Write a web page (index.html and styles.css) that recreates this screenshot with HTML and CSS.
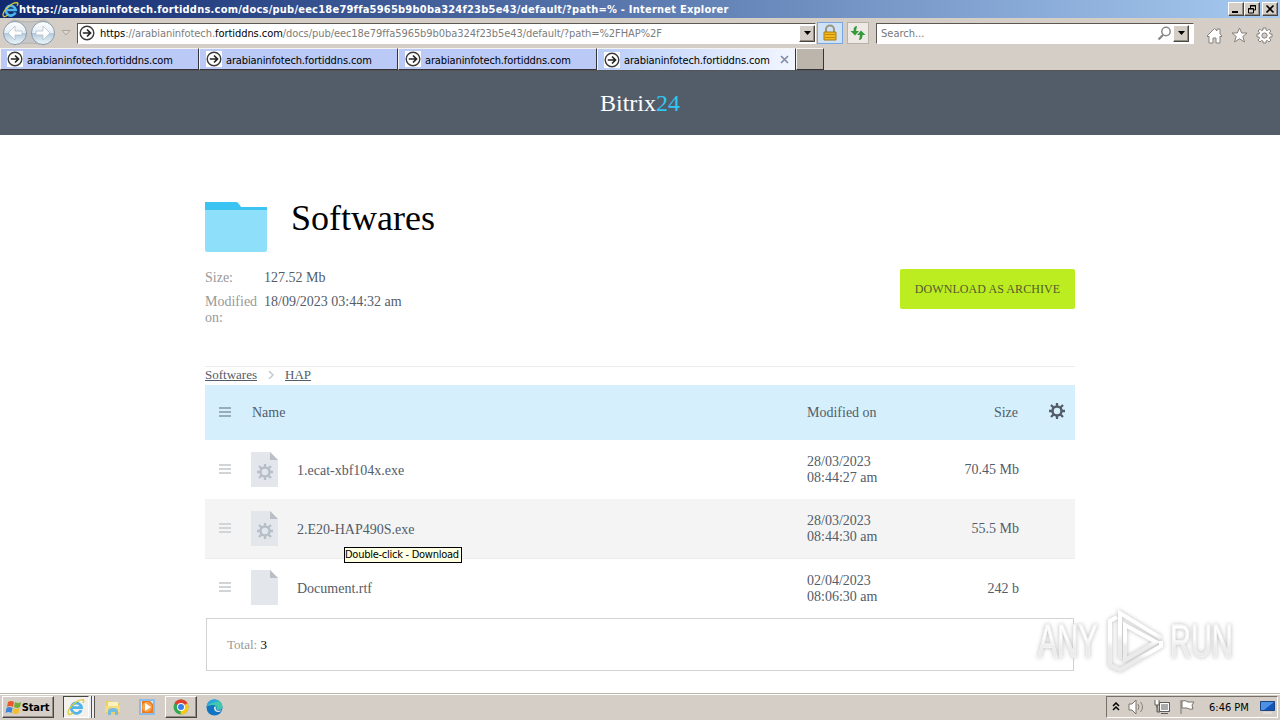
FILE: index.html
```
<!DOCTYPE html>
<html lang="en">
<head>
  <meta charset="UTF-8" />
  <title>Bitrix24</title>
  <link rel="stylesheet" href="styles.css">
</head>
<body>
  <!-- shared icons -->
  <svg class="defs" width="0" height="0">
    <linearGradient id="round" x2="0" y2="1"><stop stop-color="#fff"/><stop offset=".48" stop-color="#e6eef5"/><stop offset=".52" stop-color="#b6cadc"/><stop offset="1" stop-color="#eef8fc"/></linearGradient>
    <linearGradient id="shade" x2="0" y2="1"><stop offset=".45" stop-color="#fff"/><stop offset=".6" stop-color="#ebebeb"/></linearGradient>
    <symbol id="go" viewBox="0 0 16 16"><path d="M0 0h16v16H0z" fill="#fff"/><circle cx="8" cy="8" r="6.800" fill="#fff" stroke="#3a3a3a" stroke-width="1.4"/><path d="M3.8 8H11M8 4.500L11.500 8 8 11.500" fill="none" stroke="#222" stroke-width="1.700"/></symbol>
    <symbol id="ie" viewBox="0 0 16 16"><path d="M12.600 10.800A4.600 4.600 0 1 1 12.900 8.500H4.500" fill="none" stroke="#4fb4ea" stroke-width="2.500"/><path d="M1.500 14.500C-1 11 8 1.500 14 1.500c1.800.200.600 2.400 0 3M1.500 14.500c1 .600 2.800-.500 4-1.400" fill="none" stroke="#dccb3e" stroke-width="1.200"/></symbol>
    <symbol id="gear" viewBox="0 0 16 16"><circle cx="8" cy="8" r="4.500" fill="none" stroke="currentColor" stroke-width="2.500"/><path d="M8 0v3M8 13v3M0 8h3M13 8h3M2 2l2.500 2.500M11.500 11.500L14 14M14 2l-2.500 2.500M4.500 11.500L2 14" stroke="currentColor" stroke-width="2.300"/></symbol>
    <symbol id="page" viewBox="0 0 27 35"><path d="M0 0h19l8 8v27H0z" fill="#e3e6ea"/><path d="M19 0l8 8h-8z" fill="#b9bfc4"/></symbol>
  </svg>

  <header class="titlebar">
    <svg width="17" height="17"><use href="#ie"/></svg>
    <span class="title">https://arabianinfotech.fortiddns.com/docs/pub/eec18e79ffa5965b9b0ba324f23b5e43/default/?path=% - Internet Explorer</span>
    <div class="controls">
      <span class="btn"><svg width="12" height="10"><path d="M2 8h6" stroke="#000" stroke-width="2"/></svg></span>
      <span class="btn"><svg width="12" height="10"><path d="M4.500 4V1.500h5V6H8M4 2h6M2.500 4.500h5V9h-5zM2 5h6" fill="none" stroke="#000"/></svg></span>
      <span class="btn close"><svg width="12" height="10"><path d="M2.500 1.500l7 7M9.500 1.500l-7 7" stroke="#000" stroke-width="1.700"/></svg></span>
    </div>
  </header>

  <nav class="navbar">
    <svg class="backforward" width="56" height="28" viewBox="0 0 56 28">
      <path d="M13 1Q28 5 43 1a13 13 0 0 1 0 25Q28 22 13 26A13 13 0 0 1 13 1z" fill="#c7c7c7" stroke="#b5b2ae"/>
      <g fill="url(#round)" stroke="#899bab"><circle cx="14" cy="14" r="11.500"/><circle cx="42" cy="14" r="11.500"/></g>
      <path d="M14 7l-7 7 7 7v-5h7v-4h-7zM42 7l7 7-7 7v-5h-7v-4h7z" fill="#fff" stroke="#a9bac9" stroke-width=".7"/>
    </svg>
    <svg class="history" width="10" height="6"><path d="M1 .500h8L5 5z" fill="#ddd8d2" stroke="#aaa49c"/></svg>
    <div class="field address">
      <svg width="16" height="16"><use href="#go"/></svg>
      <span class="url"><b>https</b>://arabianinfotech.<b>fortiddns.com</b>/docs/pub/eec18e79ffa5965b9b0ba324f23b5e43/default/?path=%2FHAP%2F</span>
      <span class="btn drop"><svg width="7" height="4"><path d="M0 0h7L3.500 4z"/></svg></span>
    </div>
    <span class="tool lock"><svg width="16" height="18"><path d="M4 9V5.500a4 4 0 0 1 8 0V9" fill="none" stroke="#999682" stroke-width="2"/><path d="M2 8h12v8H2z" fill="#eeb91c" stroke="#a97c12"/><path d="M3 10.500h10M3 13.500h10" stroke="#c98b09"/></svg></span>
    <span class="tool refresh"><svg width="16" height="14"><path d="M7 0Q3.500 0 3.500 5H.500L5 9.500 9 5H6zM9 14q3.500 0 3.500-5h3L11 4.500 7 9h3z" fill="#349b3a"/></svg></span>
    <div class="field search">
      <span>Search...</span>
      <svg width="15" height="15"><circle cx="9" cy="5.500" r="4.200" fill="#fff" stroke="#888" stroke-width="1.500"/><path d="M6 9l-4.500 4.500" stroke="#888" stroke-width="2.300"/></svg>
      <span class="btn drop"><svg width="7" height="4"><path d="M0 0h7L3.500 4z"/></svg></span>
    </div>
    <div class="nav-icons">
      <svg width="17" height="17"><path d="M1 9l7.500-7.500L11 4V2h3v5l2 2-1 1-1-1v7h-4v-5H7v5H3V9l-1 1z" fill="#fff" stroke="#85817b"/></svg>
      <svg width="17" height="17"><path d="M8.500 1l2.200 5H16l-4.200 3.500L13.500 15l-5-3.200-5 3.200 1.700-5.500L1 6h5.300z" fill="#fff" stroke="#85817b"/></svg>
      <svg width="17" height="17"><path d="M7 1h3v2l1.500.700L13 2.200 15 4l-1.500 1.700L14 7h2v3h-2l-.600 1.300L15 13l-2 2-1.500-1.500L10 14v2H7v-2l-1.500-.500L4 15l-2-2 1.500-1.700L3 10H1V7h2l.500-1.300L2 4l2-1.800 1.500 1.500L7 3z" fill="#fff" stroke="#85817b"/><circle cx="8.500" cy="8.500" r="2.600" fill="#d4cec6" stroke="#85817b"/></svg>
    </div>
  </nav>

  <div class="tabs">
    <div class="tab"><svg width="16" height="16"><use href="#go"/></svg><span>arabianinfotech.fortiddns.com</span></div>
    <div class="tab"><svg width="16" height="16"><use href="#go"/></svg><span>arabianinfotech.fortiddns.com</span></div>
    <div class="tab"><svg width="16" height="16"><use href="#go"/></svg><span>arabianinfotech.fortiddns.com</span></div>
    <div class="tab active"><svg width="16" height="16"><use href="#go"/></svg><span>arabianinfotech.fortiddns.com</span><svg class="x" width="9" height="9"><path d="M1 1l7 7M8 1L1 8" stroke="#858da5" stroke-width="1.700"/></svg></div>
    <div class="tab new"></div>
  </div>

  <main class="page">
    <div class="brand">Bitrix<span>24</span></div>
    <div class="content">
      <div class="heading">
        <svg width="62" height="50"><path d="M0 0h31q2 0 3 2l2 3h26v6H0z" fill="#3bc4f2"/><path d="M0 8h62v40q0 2-2 2H2q-2 0-2-2z" fill="#8ddffa"/></svg>
        <h1>Softwares</h1>
      </div>
      <div class="info">
        <dl>
          <dt>Size:</dt><dd>127.52 Mb</dd>
          <dt>Modified on:</dt><dd>18/09/2023 03:44:32 am</dd>
        </dl>
        <a class="download">DOWNLOAD AS ARCHIVE</a>
      </div>
      <div class="crumbs"><a>Softwares</a><svg width="6" height="8"><path d="M1 0l4 4-4 4" fill="none" stroke="#c5c9cd" stroke-width="1.500"/></svg><a>HAP</a></div>

      <div class="row head">
        <i class="burger"></i><span class="name">Name</span><span class="date">Modified on</span><span class="size">Size</span>
        <svg class="settings" width="16" height="16"><use href="#gear"/></svg>
      </div>
      <div class="row">
        <i class="burger"></i>
        <svg class="file" width="27" height="35"><use href="#page"/><svg class="cog" x="6" y="12" width="16" height="16"><use href="#gear"/></svg></svg>
        <span class="name">1.ecat-xbf104x.exe</span><span class="date">28/03/2023<br>08:44:27 am</span><span class="size">70.45 Mb</span>
      </div>
      <div class="row hover">
        <i class="burger"></i>
        <svg class="file" width="27" height="35"><use href="#page"/><svg class="cog" x="6" y="12" width="16" height="16"><use href="#gear"/></svg></svg>
        <span class="name">2.E20-HAP490S.exe</span><span class="date">28/03/2023<br>08:44:30 am</span><span class="size">55.5 Mb</span>
        <span class="tooltip">Double-click - Download</span>
      </div>
      <div class="row last">
        <i class="burger"></i>
        <svg class="file" width="27" height="35"><use href="#page"/></svg>
        <span class="name">Document.rtf</span><span class="date">02/04/2023<br>08:06:30 am</span><span class="size">242 b</span>
      </div>
      <div class="total">Total: <b>3</b></div>
    </div>

    <div class="watermark">
      <span>ANY</span>
      <svg width="60" height="66" viewBox="0 0 60 66">
        <g fill="none" stroke="url(#shade)" stroke-width="4">
          <path d="M11 9L4 13v44l7 4"/>
          <path d="M14 51V5l41 25"/>
          <path d="M19 17l31 17-31 18z"/>
          <path d="M9 59l5 3 41-24v-5"/>
        </g>
      </svg>
      <span>RUN</span>
    </div>
  </main>

  <footer class="taskbar">
    <div class="btn start"><svg width="17" height="16"><path d="M3 3q3-2 6 0L8 8Q5 6 2 8z" fill="#e9592a"/><path d="M10 3q3 2 6 0l-1 5q-3 2-6 0z" fill="#71ae36"/><path d="M1.500 9q3-2 6 0l-1 5q-3-2-6 0z" fill="#3e83d6"/><path d="M8.500 9q3 2 6 0l-1 5q-3 2-6 0z" fill="#f5bd29"/></svg><span>Start</span></div>
    <div class="task-ie"><svg width="18" height="18"><use href="#ie"/></svg></div>
    <i class="stack"></i><i class="stack"></i>
    <svg class="explorer" width="18" height="18"><path d="M2 3h6l1 2h7v11H2z" fill="#edcf69"/><path d="M4 4h10v5H4z" fill="#fbf1bc"/><path d="M1 8h15v6H1z" fill="#f5db81"/><path d="M4 17v-4q0-3 5-3t5 3v4h-3v-3H7v3z" fill="#74bde0"/></svg>
    <svg class="media" width="18" height="18"><path d="M1 1h16v16H1z" fill="#8fbce5"/><path d="M3 3h12v12H3z" fill="#d6eaf6"/><path d="M4 3h8l3 3v9H4z" fill="#ee7b17"/><circle cx="9" cy="9" r="5" fill="#f6a24e"/><path d="M7 5l6 4-6 4z" fill="#fff"/></svg>
    <div class="btn chrome"><svg width="16" height="16"><circle cx="8" cy="8" r="7.500" fill="#36a852"/><path d="M8 8L1.500 4.300A7.500 7.500 0 0 1 14.500 4.300z" fill="#e33e2d"/><path d="M8 8l6.500-3.700A7.500 7.500 0 0 1 7.500 15.500z" fill="#fbc818"/><circle cx="8" cy="8" r="4" fill="#fff"/><circle cx="8" cy="8" r="3" fill="#397fea"/></svg></div>
    <svg class="edge" width="17" height="17"><circle cx="8.500" cy="8.500" r="8" fill="#1474c4"/><path d="M.600 8C1-1 15-2 16.500 7c.300 4-4 4.500-6.500 3.500 2-3-1-5-4-4.500S1 7 .600 8z" fill="#40c7ad"/><path d="M.600 8C1 0 9-1 13 2 9 3 3 4 .600 8z" fill="#2ba6dc"/><path d="M8 9c0-2 2-2 2-.500-.500 1-.500 2 1 3 2 .600 4 .300 5-.500-2 3-8 3-8-2z" fill="#d9e7ea"/></svg>
    <div class="tray">
      <svg width="8" height="10"><path d="M1 4l3-3 3 3M1 8l3-3 3 3" fill="none" stroke="#000" stroke-width="1.500"/></svg>
      <svg width="18" height="16"><path d="M1 5h3l4-4v14l-4-4H1z" fill="#fff" stroke="#77736c"/><path d="M10 5q2 3 0 6M12.500 3q4 5 0 10" fill="none" stroke="#858078"/></svg>
      <svg width="17" height="16"><path d="M5.500 3.500h10v9h-10zM7 14.500h7M3 6v7h3" fill="#aaa" stroke="#605c57"/><path d="M6.500 4.500h8v7h-8z" fill="none" stroke="#fff"/><path d="M1 1v5h4V1M3 6v3" fill="#fff" stroke="#605c57"/></svg>
      <svg width="17" height="16"><path d="M2 1v14M3 2q4-1 6 1h6l-2 3 1 4q-3 1-6-1H3z" fill="#fff" stroke="#77736c"/></svg>
      <span>6:46 PM</span>
      <svg width="15" height="13"><path d="M.500.500h14v9H.500z" fill="#1555ba" stroke="#174683"/><path d="M1 1h13L4 9H1z" fill="#4c91e5"/><path d="M3 12h9" stroke="#eee"/></svg>
    </div>
  </footer>
</body>
</html>
```
FILE: styles.css
```
* {
  box-sizing: border-box;
}
body {
  margin: 0;
  width: 1280px;
  height: 720px;
  overflow: hidden;
  background: #d4cec6;
  font: 11px "DejaVu Sans Condensed", "DejaVu Sans", sans-serif;
  color: #000;
}
svg {
  display: block;
  flex: none;
}
.defs {
  position: absolute;
}
.btn {
  display: flex;
  align-items: center;
  justify-content: center;
  background: #d4cec6;
  border: 1px solid;
  border-color: #fff #494641 #494641 #fff;
  box-shadow: inset -1px -1px #928c84;
}
.titlebar {
  height: 18px;
  display: flex;
  align-items: center;
  padding: 0 2px;
  background: linear-gradient(90deg, #10296f, #a6caf0);
  color: #fff;
}
.title {
  font-weight: bold;
  letter-spacing: 0.23px;
  white-space: nowrap;
}
.controls {
  margin-left: auto;
  display: flex;
}
.controls .btn {
  width: 16px;
  height: 14px;
}
.controls .close {
  margin-left: 2px;
}
.navbar {
  height: 30px;
  display: flex;
  align-items: center;
  padding-left: 1px;
}
.history {
  margin: 0 6px 0 4px;
}
.field {
  height: 21px;
  display: flex;
  align-items: center;
  background: #fff;
  border: 1px solid;
  border-color: #5d5852 #fff #fff #5d5852;
}
.address {
  width: 739px;
  padding-left: 1px;
}
.url {
  margin-left: 5px;
  color: #7d7d7d;
  letter-spacing: -0.06px;
  white-space: nowrap;
}
.url b {
  font-weight: normal;
  color: #000;
}
.drop {
  width: 16px;
  height: 17px;
  margin-left: auto;
}
.tool {
  width: 26px;
  height: 22px;
  display: flex;
  align-items: center;
  justify-content: center;
  background: #cee1f5;
  border: 1px solid #79a7df;
}
.lock {
  margin-left: 1px;
}
.refresh {
  width: 22px;
  margin: 0 7px 0 4px;
  background: #eee9e4;
  border-color: #b8b1a8;
}
.search {
  width: 318px;
  padding: 0 4px;
  color: #777;
}
.search > svg {
  margin-left: auto;
}
.search .drop {
  margin-left: 1px;
}
.nav-icons {
  display: flex;
  gap: 8px;
  margin: 4px 0 0 12px;
}
.tabs {
  height: 23px;
  display: flex;
  border-bottom: 1px solid #555;
}
.tab {
  width: 199px;
  display: flex;
  align-items: center;
  padding-left: 6px;
  background: #bac9f5;
  border: 1px solid;
  border-color: #f5f3ef #35343b #35343b #f5f3ef;
  border-width: 1px 1px 1px 1px;
}
.tab span {
  margin: 2px 0 0 4px;
  letter-spacing: -0.13px;
}
.tab.active {
  background: linear-gradient(90deg, #b9cdf9, #f2f6ff);
  border-bottom: 0;
}
.tab .x {
  margin-left: 10px;
}
.tab.new {
  width: 28px;
  background: #bcb5ab;
}
.page {
  position: relative;
  height: 622px;
  background: #fff;
  font-family: "Liberation Serif", serif;
  font-size: 14px;
  line-height: 16px;
  color: #535c69;
}
.brand {
  height: 64px;
  background: #535c69;
  color: #fff;
  font-size: 24px;
  line-height: 65px;
  text-align: center;
}
.brand span {
  color: #2fc6f6;
}
.content {
  width: 870px;
  margin: 0 auto;
  padding-top: 67px;
}
.heading {
  display: flex;
  gap: 24px;
}
h1 {
  margin: 0;
  font-size: 36px;
  font-weight: normal;
  line-height: 33px;
  color: #000;
}
.info {
  display: flex;
  justify-content: space-between;
  height: 115px;
  padding-top: 17px;
  border-bottom: 1px solid #eaebed;
}
dl {
  display: grid;
  grid-template-columns: 59px 200px;
  row-gap: 8px;
  align-content: start;
  margin: 1px 0 0;
}
dt {
  padding-right: 5px;
  color: #999;
}
dd {
  margin: 0;
}
.download {
  width: 175px;
  height: 40px;
  border-radius: 2px;
  background: #bbed21;
  color: #535c30;
  font-size: 12px;
  letter-spacing: 0.08px;
  line-height: 40px;
  text-align: center;
}
.crumbs {
  height: 18px;
  display: flex;
  align-items: center;
  gap: 11px;
  font-size: 13px;
  line-height: 14px;
  padding-bottom: 2px;
}
.crumbs a {
  text-decoration: underline;
}
.row {
  position: relative;
  height: 59px;
  display: flex;
  align-items: center;
  padding-left: 14px;
}
.row.head {
  height: 55px;
  background: #d5f0fc;
}
.row.hover {
  height: 60px;
  background: #f4f4f4;
  border-bottom: 1px solid #ececec;
}
.burger {
  width: 12px;
  height: 10px;
  margin: -2px 20px 0 0;
  border-top: 2px solid #d2d5d8;
  border-bottom: 2px solid #d2d5d8;
  background: linear-gradient(#d2d5d8, #d2d5d8) 0 2px / 12px 2px no-repeat;
}
.head .burger {
  margin-right: 21px;
  border-color: #97adb9;
  background-image: linear-gradient(#97adb9, #97adb9);
}
.last .file {
  margin-top: -2px;
}
.last .burger {
  margin-top: -4px;
}
.cog {
  color: #b6bfc7;
}
.name {
  width: 510px;
  margin: 2px 0 0 19px;
}
.last .name {
  margin-top: 0;
}
.head .name {
  width: 555px;
  margin: 0;
}
.date {
  width: 90px;
}
.size {
  width: 122px;
  text-align: right;
}
.head .size {
  width: 121px;
}
.settings {
  margin: -3px 0 0 31px;
}
.tooltip {
  position: absolute;
  left: 139px;
  top: 48px;
  z-index: 1;
  height: 16px;
  width: 118px;
  background: #ffffe1;
  border: 1px solid #000;
  color: #000;
  font: 11px/14px "DejaVu Sans Condensed", sans-serif;
  letter-spacing: -0.26px;
  white-space: nowrap;
}
.total {
  height: 53px;
  margin: 0 1px;
  padding-left: 20px;
  border: 1px solid #d2d3d5;
  font-size: 13px;
  line-height: 51px;
  color: #999;
}
.total b {
  font-weight: normal;
  color: #000;
}
.watermark {
  position: absolute;
  left: 1038px;
  top: 537px;
  display: flex;
  align-items: center;
  gap: 4px;
  filter: drop-shadow(0 0 2px #bbb);
}
.watermark span {
  width: 98px;
  margin-right: -34px;
  font: 46px/66px "Liberation Sans", sans-serif;
  color: transparent;
  background: linear-gradient(#fff 45%, #ebebeb 60%);
  -webkit-background-clip: text;
  background-clip: text;
  -webkit-text-stroke: 1px #f3f3f3;
  transform: scaleX(0.63);
  transform-origin: 0 0;
}
.taskbar {
  height: 27px;
  display: flex;
  align-items: center;
  border-top: 1px solid #bcb6ae;
  box-shadow: inset 0 1px #fff;
  padding: 0 2px;
}
.start {
  width: 52px;
  height: 22px;
  font-weight: bold;
  letter-spacing: -0.1px;
}
.start svg {
  margin-left: -2px;
}
.task-ie {
  width: 26px;
  height: 22px;
  margin-left: 9px;
  padding: 1px 3px;
  background: #f3f1ee;
  border: 1px solid;
  border-color: #494641 #fff #fff #494641;
}
.stack {
  width: 3px;
  height: 22px;
  border-right: 1px solid #55514c;
  background: #eee;
}
.explorer {
  margin-left: 9px;
}
.media {
  margin-left: 16px;
}
.chrome {
  width: 32px;
  height: 22px;
  margin-left: 9px;
}
.edge {
  margin-left: 9px;
}
.tray {
  width: 172px;
  height: 22px;
  margin-left: auto;
  padding-left: 5px;
  display: flex;
  align-items: center;
  gap: 8px;
  border: 1px solid;
  border-color: #77716a #fff #fff #77716a;
}
.tray span {
  margin: 0 3px 0 5px;
}
```
